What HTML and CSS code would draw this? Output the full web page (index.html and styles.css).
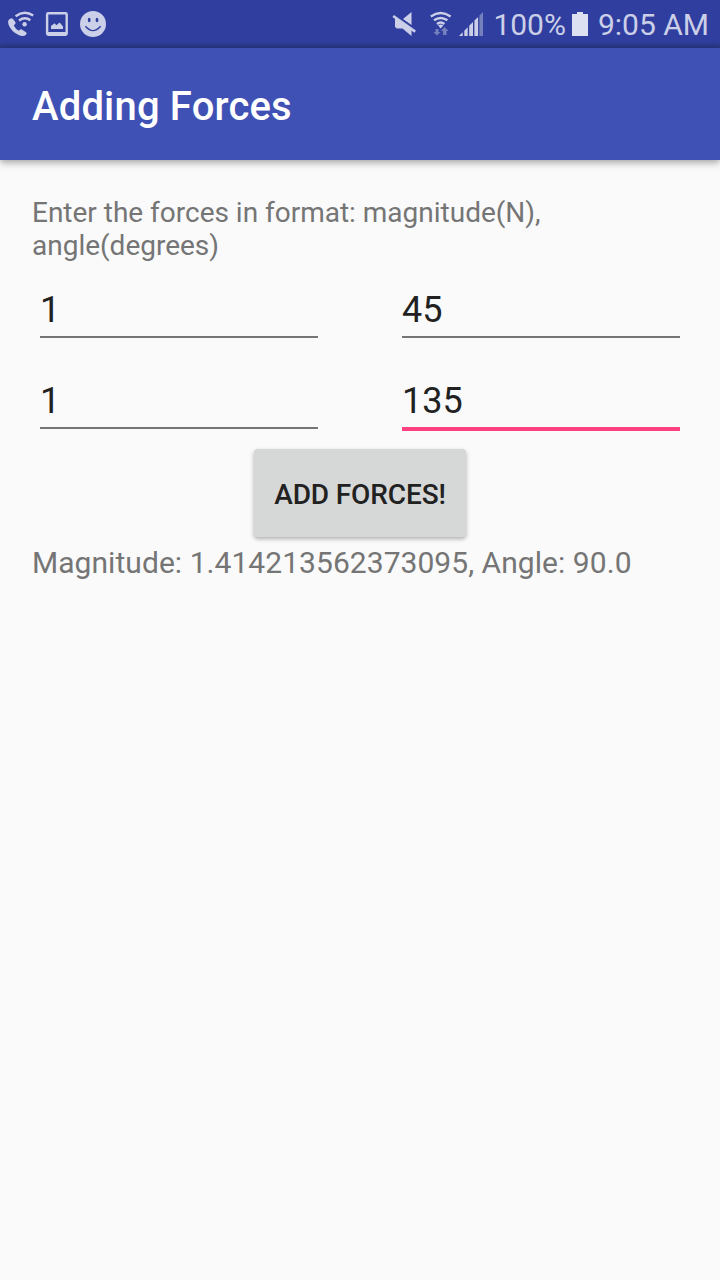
FILE: index.html
```
<!DOCTYPE html>
<html lang="en">
<head>
    <meta charset="UTF-8">
    <meta name="viewport" content="width=device-width, initial-scale=1.0"/>
    <title>Adding Forces</title>
    <link rel="stylesheet" href="styles.css">
</head>
<body>
<div class="statusBar">
    <svg class="notices" width="120" height="48" viewBox="0 0 120 48">
        <!--wifi call-->
        <path d="M8 21.5Q8.4 19 11.4 18.2Q12.4 18.2 13 19L15.6 22.6Q16 23.8 13.8 25.4Q15.4 28.8 18.8 30.7Q20.6 29 21.8 29.4L26 32.2Q27.4 33.4 26.2 34.4Q24.4 36.4 21.6 36C15.5 34.4 8.4 28.8 8 21.5Z"/>
        <g class="line">
            <path d="M15.6 16.2Q24.5 9.8 33.2 15.6"/>
            <path d="M19 20.5Q25 16.3 30.3 20.2"/>
        </g>
        <circle cx="24.6" cy="24.3" r="2.2"/>
        <!--picture-->
        <rect class="line" x="47.1" y="13.2" width="19.6" height="21.6" rx="1.2"/>
        <path d="M47 32H67V35H47ZM51 29V26L54.5 23.3L56.3 25.2L59.7 22.6L63 26.5V29Z"/>
        <!--smile-->
        <circle cx="93" cy="24" r="13"/>
        <ellipse class="hole" cx="89.2" cy="20" rx="1.4" ry="2.2"/>
        <ellipse class="hole" cx="97" cy="20" rx="1.4" ry="2.2"/>
        <path class="mouth" d="M85.4 26.2Q93 35 100.6 26.2"/>
    </svg>
    <svg class="signals" width="94" height="48" viewBox="0 0 94 48">
        <!--muted-->
        <path d="M19.5 12V25L11 19ZM3 18L19.5 29V36L10.5 28.5H5L3 27Z"/>
        <path class="slash" d="M1.2 16L23.2 31.6"/>
        <!--wifi-->
        <g class="line">
            <path d="M38.8 16.4Q48.7 9.6 58.6 16.4"/>
            <path d="M42 20.3Q48.7 15.6 55.4 20.3"/>
            <path d="M45 24Q48.7 21.2 52.4 24"/>
        </g>
        <path d="M46 25.2Q48.7 24 51.4 25.2L48.7 28.4Z"/>
        <path class="dim" d="M43.5 29H46.5V32H48.5L45 35.5L41.5 32H43.5ZM51 35V31H49L52.5 27L56.5 31H54.5V35Z"/>
        <!--cell signal-->
        <path d="M67 36L70.7 32.3V36ZM72.3 36V30.7L75.7 27.3V36ZM77.2 36V25.8L81 22V36ZM82.4 36V20.6L86.1 17V36Z"/>
        <path class="dim" d="M87.4 36V15.6L91 12V36Z"/>
    </svg>
    <span class="percent">100%</span>
    <svg class="battery" width="16" height="48" viewBox="0 0 16 48">
        <path d="M5 12H11V14H16V36H0V14H5Z"/>
    </svg>
    <span class="clock">9:05 AM</span>
</div>

<header class="appBar">
    <h1>Adding Forces</h1>
</header>

<main class="content">
    <p class="hint">Enter the forces in format: magnitude(N), angle(degrees)</p>
    <div class="forces">
        <input type="text" value="1"/>
        <input type="text" value="45"/>
        <input type="text" value="1"/>
        <input class="active" type="text" value="135"/>
    </div>
    <button class="addBtn" type="button">ADD FORCES!</button>
    <p class="result">Magnitude: 1.414213562373095, Angle: 90.0</p>
</main>
</body>
</html>
```
FILE: styles.css
```
* {
    margin: 0;
    padding: 0;
    box-sizing: border-box;
    font-family: Roboto, sans-serif;
}

body {
    min-height: 1280px;
    background: #FAFAFA;
}

.statusBar {
    display: flex;
    height: 48px;
    padding-right: 11px;
    background: linear-gradient(#303F9F 41px, #2A3786 48px);
    color: #CBCFE8;
    font-size: 30px;
    line-height: 49px;
    white-space: nowrap;
}

.statusBar svg {
    flex: none;
    fill: #CBCFE8;
}

.statusBar .line {
    fill: none;
    stroke: #CBCFE8;
    stroke-width: 2.4;
}

.statusBar .slash {
    stroke: #CBCFE8;
    stroke-width: 2.6;
}

.statusBar .hole {
    fill: #303F9F;
}

.statusBar .mouth {
    fill: none;
    stroke: #303F9F;
    stroke-width: 1.4;
}

.statusBar .dim {
    fill: #7580BF;
}

.signals {
    margin-left: auto;
}

.percent {
    margin-left: 7px;
}

.statusBar .battery {
    margin: 0 10px 0 6px;
    fill: #DDE0F0;
}

.appBar {
    height: 112px;
    padding: 35px 32px 0;
    background: #3F51B5;
    box-shadow: 0 2px 8px rgba(0, 0, 0, .4);
}

.appBar h1 {
    color: #FFF;
    font-size: 40px;
    font-weight: 500;
    line-height: 47px;
    letter-spacing: .17px;
}

.content {
    padding: 36px 32px 0;
    color: #757575;
}

.hint {
    font-size: 28px;
    line-height: 33px;
    letter-spacing: -.01px;
}

.forces {
    display: grid;
    grid-template-columns: 278px 278px;
    column-gap: 84px;
    row-gap: 41px;
    padding: 26px 8px 0;
}

input {
    width: 100%;
    height: 50px;
    padding-bottom: 5px;
    border: 0;
    border-bottom: 2px solid #757575;
    outline: none;
    background: none;
    color: #212121;
    font-size: 36px;
}

input.active {
    height: 52px;
    border-bottom: 4px solid #FF4081;
}

.addBtn {
    display: block;
    width: 212px;
    height: 88px;
    margin: 18px auto 0;
    padding-top: 2px;
    border: 0;
    border-radius: 4px;
    background: #D6D7D7;
    box-shadow: 0 2px 4px rgba(0, 0, 0, .3);
    color: #212121;
    font-size: 28px;
    font-weight: 500;
    letter-spacing: -.12px;
}

.result {
    margin-top: 8px;
    font-size: 30px;
    line-height: 35px;
    letter-spacing: .05px;
}
```
